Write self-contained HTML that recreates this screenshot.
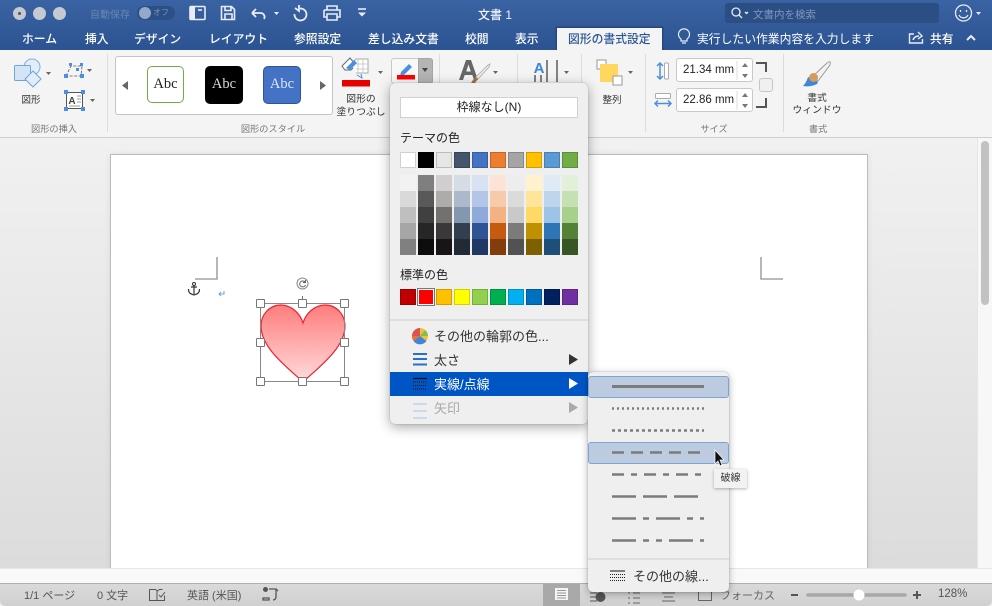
<!DOCTYPE html>
<html lang="ja"><head><meta charset="utf-8"><style>
html,body{margin:0;padding:0}
body{width:992px;height:606px;position:relative;overflow:hidden;background:#efefef;font-family:"Liberation Sans","Noto Sans CJK JP",sans-serif;font-size:12px;color:#333}
.a{position:absolute;white-space:nowrap}
.c{position:absolute;white-space:nowrap;transform:translateX(-50%)}
.s{position:absolute;width:14px;height:14px;border:1px solid rgba(0,0,0,.18)}
.t{font-size:11.800px;color:#fff;font-weight:500;top:30px}
.g{font-size:9.200px;color:#777;top:121px}
.h{position:absolute;width:7px;height:7px;background:#fff;border:1px solid #777;border-radius:1px}
.m{font-size:13px;color:#333;left:434px}
.st{font-size:11px;color:#555;top:587px}
svg{position:absolute;overflow:visible}
</style></head><body>
<!-- title -->
<div class="a" style="left:0;top:0;width:992px;height:50px;background:linear-gradient(#3a63a3,#2c5391)"></div>
<div class="a" style="left:13px;top:7px;width:13px;height:13px;border-radius:50%;background:#c5cad2"></div><div class="a" style="left:18px;top:12px;width:3px;height:3px;border-radius:50%;background:#555"></div>
<div class="a" style="left:33px;top:7px;width:13px;height:13px;border-radius:50%;background:#c5cad2"></div>
<div class="a" style="left:53px;top:7px;width:13px;height:13px;border-radius:50%;background:#c5cad2"></div>
<div class="a" style="left:90px;top:6px;font-size:10px;color:#6b87b3">自動保存</div>
<div class="a" style="left:137px;top:6px;width:38px;height:14px;border-radius:7px;background:#2c4f86"></div>
<div class="a" style="left:139px;top:7px;width:12px;height:12px;border-radius:50%;background:#94a8c9"></div>
<div class="a" style="left:153px;top:7px;font-size:8px;color:#7c94ba">オフ</div>
<svg style="left:0;top:0" width="400" height="30" fill="none" stroke="#e8edf5" stroke-width="1.600">
<rect x="190" y="6.500" width="15" height="13" rx="1"/><path d="M190 7h5v12h-5z" fill="#e8edf5" stroke="none"/><path d="M198 10h4"/>
<path d="M221.500 6.500h10l3 3v10h-13zM225 6.500v4h6v-4M225 19v-5h7v5"/>
<path d="M252 13l4-4M252 13l4 4M252 13h9a4 4 0 0 1 3 6" stroke-width="1.800"/><path d="M274 12h5l-2.500 3z" fill="#e8edf5" stroke="none"/>
<path d="M300 8.500a6 6 0 1 1-5.500 5.500M299 5v6l-4-3" stroke-width="1.800"/>
<path d="M327 10V6h10v4M324 10h16v7h-3M327 17h-3v-7M327 14h10v6h-10z"/>
<path d="M358 9h8" /><path d="M358 12.500h8l-4 4z" fill="#e8edf5" stroke="none"/>
</svg>
<div class="c" style="left:495px;top:6px;font-size:12px;color:#f2f5fa;font-weight:500">文書 1</div>
<div class="a" style="left:725px;top:3px;width:214px;height:20px;border-radius:3px;background:#2b4e85"></div>
<svg style="left:0;top:0" width="992" height="50" fill="none" stroke="#e8edf5" stroke-width="1.300"><circle cx="736" cy="12" r="4"/><path d="M739 15l3 3M745 12l1.500 1.500 1.500-1.500"/><circle cx="963.500" cy="13" r="8"/><path d="M959 15a5 5 0 0 0 9 0"/><path d="M960.500 10v2M966.500 10v2"/><path d="M976 12h5l-2.500 3z" fill="#e8edf5" stroke="none"/></svg>
<div class="a" style="left:753px;top:7px;font-size:10.500px;color:#7f97bd">文書内を検索</div>
<!-- tabs -->
<div class="a t" style="left:22px">ホーム</div><div class="a t" style="left:85px">挿入</div><div class="a t" style="left:134px">デザイン</div><div class="a t" style="left:209px">レイアウト</div><div class="a t" style="left:294px">参照設定</div><div class="a t" style="left:368px">差し込み文書</div><div class="a t" style="left:465px">校閲</div><div class="a t" style="left:515px">表示</div>
<div class="a" style="left:557px;top:28px;width:105px;height:22px;background:#f4f4f4;box-shadow:0 0 0 1.500px #24487f"></div>
<div class="a" style="left:568px;top:30px;font-size:11.800px;color:#2b5797;font-weight:500">図形の書式設定</div>
<svg style="left:677px;top:27px" width="14" height="19" fill="none" stroke="#e8edf5" stroke-width="1.200"><path d="M4 12a5.500 5.500 0 1 1 6 0v2H4zM5 16h4"/></svg>
<div class="a t" style="left:697px;font-weight:400">実行したい作業内容を入力します</div>
<svg style="left:908px;top:30px" width="70" height="15" fill="none" stroke="#e8edf5" stroke-width="1.400"><path d="M6 4H1.500v9h13V9M5 10c1-3 3-4 6-4M10 2l4 4-4 3"/><path d="M59 10l4-4 4 4" stroke-width="2"/></svg>
<div class="a t" style="left:930px;">共有</div>
<!-- ribbon -->
<div class="a" style="left:0;top:50px;width:992px;height:87px;background:#f4f4f4;border-bottom:1px solid #cfcfcf"></div>
<div class="a" style="left:107px;top:54px;width:1px;height:78px;background:#dcdcdc"></div>
<div class="a" style="left:439px;top:54px;width:1px;height:30px;background:#dcdcdc"></div>
<div class="a" style="left:517px;top:54px;width:1px;height:30px;background:#dcdcdc"></div>
<div class="a" style="left:581px;top:54px;width:1px;height:78px;background:#dcdcdc"></div>
<div class="a" style="left:645px;top:54px;width:1px;height:78px;background:#dcdcdc"></div>
<div class="a" style="left:783px;top:54px;width:1px;height:78px;background:#dcdcdc"></div>
<svg style="left:0;top:50px" width="992" height="87" fill="none">
<circle cx="32" cy="17" r="8" fill="#e3edf8" stroke="#7fb0e0"/><rect x="14.500" y="15.500" width="16" height="15" rx="1" fill="#d5e4f5" stroke="#6ea6de"/><path d="M33 21l8 8-8 8-8-8z" fill="#e3edf8" stroke="#6ea6de"/>
<path d="M46 22h5l-2.500 3zM87 19h5l-2.500 3zM90 49h5l-2.500 3zM378 21h5l-2.500 3zM493 21h5l-2.500 3zM564 21h5l-2.500 3zM628 21h5l-2.500 3z" fill="#666"/>
<path d="M66 26l5-10h11l-1 10z" stroke="#555" stroke-dasharray="3 1.500" stroke-width=".8"/><path d="M64 24h4v4h-4zM80 24h4v4h-4zM69 13h3v3h-3zM80 13h3v3h-3zM76 18h3v3h-3z" fill="#4a90e2"/>
<rect x="66.500" y="42.500" width="16" height="16" fill="#fff" stroke="#555"/><path d="M64 40h4v4h-4zM81 40h4v4h-4zM64 57h4v4h-4zM81 57h4v4h-4z" fill="#4a90e2"/>
<text x="72" y="54" font-size="10" font-weight="700" fill="#444" font-family="Liberation Sans" text-anchor="middle">A</text>
<path d="M77 46h4M77 49h4M77 52h4M69 56h11" stroke="#999"/>
<path d="M342 16l8-8 6 7-5 5-6 0z" fill="#fff" stroke="#666"/><path d="M351 14l5-5h12v14h-12" fill="#fff" stroke="#aaa"/><path d="M358 9v14M363 9v14M356 14h12M356 19h12" stroke="#ccc"/><path d="M346 18l8-8 3 3-7 7z" fill="#4a90e2"/>
<rect x="342" y="30" width="28" height="6.500" fill="#e60000"/>
<path d="M357 25l5 3-1-4" stroke="#4a90e2"/>
<path fill-rule="evenodd" d="M459 30l7-20h5l7 20h-4l-1.700-5h-7.600l-1.700 5zM466.200 21.500h4.600l-2.300-7z" fill="#666"/><path d="M476 27l12-12 2-1-1 3-11 12z" fill="#eee" stroke="#aaa" stroke-width=".8"/><path d="M471 33l4-6 3 2-3 4z" fill="#a0764b"/>
<text x="539" y="23" font-size="15" font-weight="700" fill="#3d86d8" font-family="Liberation Sans" text-anchor="middle">A</text>
<path d="M547 10v22M557 10v22M535 25v7M541 25v7" stroke="#666" stroke-width="1.600"/>
<rect x="597" y="10" width="9" height="9" fill="#fff" stroke="#999"/><rect x="600" y="14" width="18" height="18" fill="#ffd75e"/><rect x="613" y="26" width="9" height="9" fill="#fff" stroke="#999"/>
<path d="M660 13v16M657 16l3-3 3 3M657 26l3 3 3-3" stroke="#4a90d9" stroke-width="1.500"/><rect x="664.500" y="13" width="4" height="16" rx="1" fill="#fff" stroke="#aaa"/>
<rect x="655.500" y="43.500" width="15" height="5" rx="1" fill="#fff" stroke="#aaa"/><path d="M655 53.500h16M658 50.500l-3 3 3 3M668 50.500l3 3-3 3" stroke="#4a90d9" stroke-width="1.500"/>
<path d="M756 13h10v9M756 57h10v-9" stroke="#555" stroke-width="2"/>
<rect x="759.500" y="28.500" width="13" height="13" rx="2.500" fill="#f0f0f0" stroke="#c6c6c6"/>
<path d="M813 26L827 13c3-2 4-2 3 2L818 31z" fill="#f2f2f2" stroke="#999"/><path d="M808 27c-1 3-2 6-5 9 5 1 10 0 14-2 1-1 1-2 0-3z" fill="#3d86d8"/><circle cx="813.500" cy="27.500" r="4.500" fill="#d69a5c"/>
</svg>
<div class="a" style="left:115px;top:56px;width:216px;height:57px;background:#fff;border:1px solid #c4c4c4;border-radius:3px"></div>
<svg style="left:115px;top:70px" width="220" height="30"><path d="M13 11v9l-6-4.500zM205 11v9l6-4.500z" fill="#666"/></svg>
<div class="a" style="left:147px;top:66px;width:35px;height:35px;border:1px solid #70ad47;border-radius:5px;background:#fff;color:#222;font:14.500px/35px 'Liberation Serif',serif;text-align:center">Abc</div>
<div class="a" style="left:205px;top:66px;width:38px;height:38px;border-radius:5px;background:#000;color:#ddd;font:14.500px/37px 'Liberation Serif',serif;text-align:center">Abc</div>
<div class="a" style="left:263px;top:66px;width:36px;height:36px;border:1px solid #2f5597;border-radius:5px;background:#4472c4;color:#dfe7f5;font:14.500px/35px 'Liberation Serif',serif;text-align:center">Abc</div>
<div class="c" style="left:31px;top:92px;font-size:9.500px">図形</div>
<div class="c" style="left:361px;top:93px;font-size:9.800px;line-height:13px;text-align:center">図形の<br>塗りつぶし</div>
<div class="c" style="left:612px;top:92px;font-size:9.500px">整列</div>
<div class="c" style="left:817px;top:93px;font-size:9.800px;line-height:12px;text-align:center">書式<br>ウィンドウ</div>
<div class="c g" style="left:54px">図形の挿入</div><div class="c g" style="left:273px">図形のスタイル</div><div class="c g" style="left:714px">サイズ</div><div class="c g" style="left:818px">書式</div>
<!-- spinners -->
<div class="a" style="left:676px;top:58px;width:75px;height:22px;background:#fff;border:1px solid #c8c8c8;border-radius:3px;font-size:11.500px;line-height:22px;text-indent:6px;color:#222">21.34 mm</div>
<div class="a" style="left:676px;top:88px;width:75px;height:22px;background:#fff;border:1px solid #c8c8c8;border-radius:3px;font-size:11.500px;line-height:22px;text-indent:6px;color:#222;overflow:hidden">22.86 mm</div>
<svg style="left:736px;top:58px" width="16" height="54"><path d="M1 3v19M1 33v19" stroke="#ddd"/><path d="M6 9l3-4 3 4zM6 16l3 4 3-4zM6 39l3-4 3 4zM6 46l3 4 3-4z" fill="#777"/></svg>
<!-- line colour button -->
<div class="a" style="left:391px;top:58px;width:40px;height:24px;border:1px solid #c8c8c8;border-radius:3px;background:#f8f8f8"></div>
<div class="a" style="left:418px;top:58px;width:13px;height:24px;border-radius:0 3px 3px 0;background:#b4b4b4;border:1px solid #a6a6a6"></div>
<svg style="left:392px;top:58px" width="42" height="24"><path d="M9 14l8-8 3 3-8 8-4 1z" fill="#4a90e2"/><rect x="5" y="17" width="18" height="4.500" fill="#f00"/><path d="M30 10h6l-3 4z" fill="#444"/></svg>
<!-- doc area -->
<div class="a" style="left:0;top:138px;width:992px;height:445px;background:linear-gradient(#f1f1f1,#dcdcdc 430px)"></div>
<div class="a" style="left:110px;top:154px;width:758px;height:414px;background:#fff;border:1px solid #bcbcbc;border-bottom:0;box-sizing:border-box;box-shadow:0 0 6px rgba(0,0,0,.08)"></div>
<div class="a" style="left:977px;top:138px;width:15px;height:445px;background:#f7f7f7;border-left:1px solid #e6e6e6;box-sizing:border-box"></div>
<div class="a" style="left:0;top:568px;width:992px;height:15px;background:#f9f9f9;border-top:1px solid #e6e6e6;box-sizing:border-box"></div>
<div class="a" style="left:981px;top:141px;width:8px;height:164px;border-radius:4px;background:#c2c2c2"></div>
<svg style="left:0;top:0" width="992" height="606" fill="none">
<path d="M217 257v22h-22M761 257v22h22" stroke="#a4a4a4" stroke-width="1.600"/>
<path d="M194 285v9M188.500 289c0 5 3 5 5.500 6 2.500-1 5.500-1 5.500-6M191 287h6" stroke="#333" stroke-width="1.200"/><circle cx="194" cy="284" r="1.500" stroke="#333"/>
<path d="M224 291v3h-5M221 292l-2 2 2 2" stroke="#6ea6e0"/>
<defs><linearGradient id="hg" x1="0" y1="0" x2="0" y2="1"><stop offset="0" stop-color="#ff7d7d"/><stop offset="1" stop-color="#ffdcdc"/></linearGradient></defs>
<path d="M303 323c-3-10-12-18-22-18-12 0-20 10-20 21 0 22 26 41 42 56 16-15 42-34 42-56 0-11-8-21-20-21-10 0-19 8-22 18z" fill="url(#hg)" stroke="#f0202e" stroke-width="1.200"/>
<rect x="260.500" y="303.500" width="84" height="78" stroke="#888"/>
<path d="M302.500 296v7" stroke="#777"/><circle cx="302.500" cy="283.500" r="5.500" fill="#fff" stroke="#888"/><path d="M305 282a3 3 0 1 0 .5 3M305.500 280v2.500h-2.500" stroke="#555" stroke-width=".9"/>
</svg>
<div class="h" style="left:256px;top:299px"></div><div class="h" style="left:298px;top:299px"></div><div class="h" style="left:340px;top:299px"></div>
<div class="h" style="left:256px;top:338px"></div><div class="h" style="left:340px;top:338px"></div>
<div class="h" style="left:256px;top:377px"></div><div class="h" style="left:298px;top:377px"></div><div class="h" style="left:340px;top:377px"></div>
<!-- status -->
<div class="a" style="left:0;top:583px;width:992px;height:23px;background:linear-gradient(#dadada,#d0d0d0);border-top:1px solid #b0b0b0;box-sizing:border-box;border-radius:0 0 5px 5px"></div>
<div class="a st" style="left:24px">1/1 ページ</div>
<div class="a st" style="left:97px">0 文字</div>
<div class="a st" style="left:187px">英語 (米国)</div>
<div class="a" style="left:543px;top:584px;width:37px;height:22px;background:#a9a9a9"></div>
<div class="a st" style="left:720px;color:#666">フォーカス</div>
<div class="a st" style="left:938px;top:588px;font-size:11.500px">128%</div>
<svg style="left:0;top:570px" width="992" height="36" fill="none" stroke="#555">
<path d="M149.500 19.500h6l2 1.500 2-1.500h3M149.500 19.500v11h15v-5M157 21v9M159 25l2 2 4-5"/>
<circle cx="265.500" cy="19.500" r="2" fill="#555"/><path d="M263 30h6v-2h-6zM269 19h7v8a3 3 0 0 1-3 3M276 19l2 2" stroke-width="1.300"/>
<rect x="555" y="18" width="13" height="12" fill="#f4f4f4" stroke="none"/><path d="M557 20.500h9M557 23h9M557 25.500h9M557 28h9" stroke="#999"/>
<path d="M590 23h7M590 27h6M590 31h7"/><circle cx="600.500" cy="27" r="5" fill="#555" stroke="none"/>
<path d="M628 23h2M633 23h7M628 28h2M633 28h7M628 33h2M633 33h7M662 23h13M664 27h9M662 31h13" stroke="#666"/>
<rect x="698.500" y="21.500" width="13" height="9" stroke="#666"/>
<path d="M791 25h7M913 25h8M917 21v8" stroke="#555" stroke-width="2"/>
<path d="M808 25h97" stroke="#a8a8a8" stroke-width="3.500" stroke-linecap="round"/><circle cx="859" cy="25" r="5.500" fill="#fff" stroke="none"/>
</svg>
<!-- menu -->
<div class="a" style="left:390px;top:83px;width:198px;height:341px;background:#efefef;border-radius:5px;box-shadow:0 3px 12px rgba(0,0,0,.35),0 0 1px rgba(0,0,0,.4)"></div>
<div class="a" style="left:400px;top:97px;width:176px;height:19px;background:#fff;border:1px solid #d0d0d0;text-align:center;font-size:12px;line-height:19px;color:#222">枠線なし(N)</div>
<div class="a" style="left:400px;top:129px;font-size:12px;color:#222">テーマの色</div>
<div class="a" style="left:400px;top:266px;font-size:12px;color:#222">標準の色</div>
<div class="s" style="left:400px;top:152px;background:#fff"></div><div class="s" style="left:418px;top:152px;background:#000"></div><div class="s" style="left:436px;top:152px;background:#e7e6e6"></div><div class="s" style="left:454px;top:152px;background:#44546a"></div><div class="s" style="left:472px;top:152px;background:#4472c4"></div><div class="s" style="left:490px;top:152px;background:#ed7d31"></div><div class="s" style="left:508px;top:152px;background:#a5a5a5"></div><div class="s" style="left:526px;top:152px;background:#ffc000"></div><div class="s" style="left:544px;top:152px;background:#5b9bd5"></div><div class="s" style="left:562px;top:152px;background:#70ad47"></div>
<div class="a" style="left:400px;top:175px;width:16px;height:80px;background:linear-gradient(#f2f2f2 20%,#d9d9d9 20% 40%,#bfbfbf 40% 60%,#a6a6a6 60% 80%,#808080 80%)"></div>
<div class="a" style="left:418px;top:175px;width:16px;height:80px;background:linear-gradient(#7f7f7f 20%,#595959 20% 40%,#404040 40% 60%,#262626 60% 80%,#0d0d0d 80%)"></div>
<div class="a" style="left:436px;top:175px;width:16px;height:80px;background:linear-gradient(#d0cece 20%,#aeabab 20% 40%,#757070 40% 60%,#3a3838 60% 80%,#171515 80%)"></div>
<div class="a" style="left:454px;top:175px;width:16px;height:80px;background:linear-gradient(#d6dce4 20%,#adb9ca 20% 40%,#8497b0 40% 60%,#333f4f 60% 80%,#222a35 80%)"></div>
<div class="a" style="left:472px;top:175px;width:16px;height:80px;background:linear-gradient(#d9e2f3 20%,#b4c6e7 20% 40%,#8eaadb 40% 60%,#2f5496 60% 80%,#1f3864 80%)"></div>
<div class="a" style="left:490px;top:175px;width:16px;height:80px;background:linear-gradient(#fbe4d5 20%,#f7caac 20% 40%,#f4b183 40% 60%,#c55a11 60% 80%,#833c0b 80%)"></div>
<div class="a" style="left:508px;top:175px;width:16px;height:80px;background:linear-gradient(#ededed 20%,#dbdbdb 20% 40%,#c9c9c9 40% 60%,#7b7b7b 60% 80%,#525252 80%)"></div>
<div class="a" style="left:526px;top:175px;width:16px;height:80px;background:linear-gradient(#fff2cc 20%,#ffe599 20% 40%,#ffd966 40% 60%,#bf9000 60% 80%,#7f6000 80%)"></div>
<div class="a" style="left:544px;top:175px;width:16px;height:80px;background:linear-gradient(#deeaf6 20%,#bdd6ee 20% 40%,#9dc3e6 40% 60%,#2e75b5 60% 80%,#1f4e79 80%)"></div>
<div class="a" style="left:562px;top:175px;width:16px;height:80px;background:linear-gradient(#e2efd9 20%,#c5e0b3 20% 40%,#a8d08d 40% 60%,#538135 60% 80%,#375623 80%)"></div>
<div class="s" style="left:400px;top:289px;background:#c00000"></div><div class="a" style="left:418px;top:289px;width:14px;height:14px;background:#f00;border:1px solid #fff;box-shadow:0 0 0 1px #777"></div><div class="s" style="left:436px;top:289px;background:#ffc000"></div><div class="s" style="left:454px;top:289px;background:#ff0"></div><div class="s" style="left:472px;top:289px;background:#92d050"></div><div class="s" style="left:490px;top:289px;background:#00b050"></div><div class="s" style="left:508px;top:289px;background:#00b0f0"></div><div class="s" style="left:526px;top:289px;background:#0070c0"></div><div class="s" style="left:544px;top:289px;background:#002060"></div><div class="s" style="left:562px;top:289px;background:#7030a0"></div>
<div class="a" style="left:390px;top:319px;width:198px;height:2px;background:#dedede"></div>
<div class="a" style="left:390px;top:372px;width:198px;height:24px;background:#0055c4"></div>
<svg style="left:390px;top:320px" width="198" height="104" fill="none">
<circle cx="30" cy="16" r="8" fill="#f0c040"/><path d="M30 16V8a8 8 0 0 0-8 8z" fill="#d9534f"/><path d="M30 16l-6.500 5a8 8 0 0 0 13 0z" fill="#3f86d8"/><path d="M30 16l8 0a8 8 0 0 0-3-6z" fill="#8cbb4a"/><path d="M22 16a8 8 0 0 0 1.500 5l6.500-5z" fill="#e8733a"/>
<path d="M23 34h14M23 39h14M23 44.500h14" stroke="#2b6fc0" stroke-width="2"/>
<path d="M23 58.500h14" stroke="#111" stroke-width="1.300"/><path d="M23 62h14M23 65.500h14M23 69h14" stroke="#111" stroke-dasharray="1 1"/>
<path d="M23 84h14M23 91h14M23 98h14" stroke="#a9c7e8"/>
<path d="M179 34v11l9-5.500z" fill="#333"/>
<path d="M179 58v11l9-5.500z" fill="#fff"/>
<path d="M179 82v11l9-5.500z" fill="#aaa"/>
</svg>
<div class="a m" style="top:326px">その他の輪郭の色...</div>
<div class="a m" style="top:350px">太さ</div>
<div class="a m" style="top:374px;color:#fff">実線/点線</div>
<div class="a m" style="top:398px;color:#aaa">矢印</div>
<!-- submenu -->
<div class="a" style="left:588px;top:372px;width:141px;height:220px;background:#efefef;border-radius:5px;box-shadow:0 2px 8px rgba(0,0,0,.3),0 0 1px rgba(0,0,0,.4)"></div>
<div class="a" style="left:588px;top:376px;width:141px;height:22px;box-sizing:border-box;background:#bdcbe0;border:1px solid #7ea4d4;border-radius:3px"></div>
<div class="a" style="left:588px;top:442px;width:141px;height:22px;box-sizing:border-box;background:#bdcbe0;border:1px solid #7ea4d4;border-radius:3px"></div>
<svg style="left:0;top:0" width="992" height="606" fill="none" stroke="#7b7b7b" stroke-width="2.500">
<path d="M612 386.500h92" stroke-width="3"/>
<path d="M612 408.500h92" stroke-dasharray="2 3"/>
<path d="M612 430.500h92" stroke-dasharray="3 3"/>
<path d="M612 452.500h12M631 452.500h12M650 452.500h12M669 452.500h12M688 452.500h12"/>
<path d="M612 474.500h12M631 474.500h6M644 474.500h12M663 474.500h6M676 474.500h12M695 474.500h6"/>
<path d="M612 496.500h24M643 496.500h24M674 496.500h24"/>
<path d="M612 518.500h24M643 518.500h6M656 518.500h24M687 518.500h6M700 518.500h4"/>
<path d="M612 540.500h24M643 540.500h6M656 540.500h6M669 540.500h24M700 540.500h4"/>
<path d="M588 559h141" stroke="#dedede" stroke-width="2"/>
<path d="M610 571h15" stroke="#111" stroke-width="1"/><path d="M610 574.500h15M610 577.500h15M610 580.500h15" stroke="#222" stroke-width="1" stroke-dasharray="1 1"/>
<path d="M715 450v14l3-3 2 5 2-1-2-5h4z" fill="#111" stroke="#fff" stroke-width=".7"/>
</svg>
<div class="a m" style="left:633px;top:566px">その他の線...</div>
<div class="a" style="left:714px;top:469px;width:33px;height:19px;background:#f2f2f2;box-shadow:0 1px 3px rgba(0,0,0,.3);font-size:10px;line-height:19px;text-align:center;color:#333">破線</div>
</body></html>
